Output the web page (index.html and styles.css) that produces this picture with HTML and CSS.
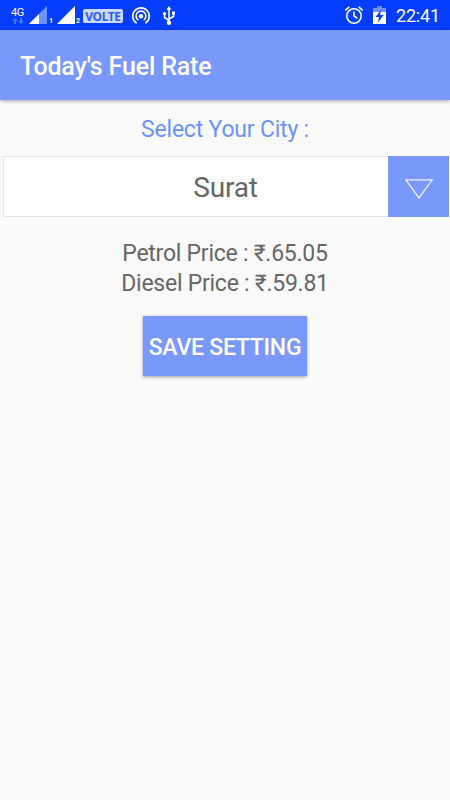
FILE: index.html
```html
<!DOCTYPE html>
<html lang="en">
<head>
<meta charset="utf-8">
<title>Today's Fuel Rate</title>
<link rel="stylesheet" href="styles.css">
</head>
<body>
<header class="status">
  <div class="network">
    <span class="network-type">4G</span>
    <svg class="arrows" width="12" height="6" viewBox="0 0 12 6"><path d="M0 3L3 0l3 3H4v3H2V3zM6 3h2V0h2v3h2L9 6z"/></svg>
  </div>
  <svg class="signal" width="18" height="18" viewBox="0 0 18 18"><path class="dim" d="M0 18L18 0v18z"/><path d="M0 18L10 8v10z"/></svg>
  <span class="sim sim-one">1</span>
  <svg class="signal" width="18" height="18" viewBox="0 0 18 18"><path d="M0 18L18 0v18z"/></svg>
  <span class="sim sim-two">2</span>
  <span class="volte">VOLTE</span>
  <svg class="hotspot line" width="20" height="20" viewBox="0 0 20 20"><path d="M5.6 17.2a8.3 8.3 0 1 1 8.8 0M7.3 14.1a4.9 4.9 0 1 1 5.4 0"/><circle class="fill" cx="10" cy="10.2" r="2.2"/></svg>
  <svg class="usb line" width="14" height="20" viewBox="0 0 14 20"><path d="M7 17V3M7 14.5L2.500 11.500V8M7 13l4.500-2.500V7"/><path class="fill" d="M7 0l2.500 3.700h-5z"/><circle class="fill" cx="7" cy="16.800" r="2.200"/><circle class="fill" cx="2.500" cy="7.500" r="1.600"/><path class="fill" d="M10 5.500h3v3h-3z"/></svg>
  <svg class="alarm line" width="20" height="20" viewBox="0 0 20 20"><circle cx="10" cy="11" r="7.200"/><path d="M10 6.500V11l3.500 2.300M1.300 5.300l4-3.500M18.700 5.300l-4-3.500"/></svg>
  <svg class="battery" width="13" height="18" viewBox="0 0 13 18"><path class="dim" d="M0 2h4V0h5v2h4v4H0z"/><path d="M0 6h13v12H0z"/><path class="bolt" d="M8 4L2.500 11H6l-1 5.500L10.700 9H7z"/></svg>
  <time class="clock">22:41</time>
</header>
<div class="toolbar"><h1 class="title">Today's Fuel Rate</h1></div>
<main class="content">
  <label class="prompt">Select Your City :</label>
  <div class="picker">
    <span class="city">Surat</span>
    <button class="drop" aria-label="Open city list"><svg width="28" height="20" viewBox="0 0 28 20"><path d="M.8.800h26.400L14 19z"/></svg></button>
  </div>
  <p class="price petrol">Petrol Price : ₹.65.05</p>
  <p class="price diesel">Diesel Price : ₹.59.81</p>
  <button class="save">SAVE SETTING</button>
</main>
</body>
</html>
```

FILE: styles.css
```css
* { box-sizing: border-box; }
body {
  margin: 0;
  height: 800px;
  overflow: hidden;
  background: #fafafa;
  color: #666;
  font-family: Roboto, sans-serif;
}
button { border: 0; padding: 0; font-family: inherit; }
svg { display: block; flex: none; }

.status {
  display: flex;
  align-items: flex-start;
  height: 30px;
  padding: 6px 0 0 11px;
  background: #043efc;
  color: #fff;
  fill: #fff;
}
.network { width: 18px; }
.network-type { display: block; height: 12px; font-size: 11px; line-height: 13px; letter-spacing: -.4px; }
.arrows { margin-left: 1px; fill: #4774ff; }
.dim { fill: #6d91ff; }
.sim { font-size: 7px; font-weight: 700; line-height: 8px; padding-top: 11px; }
.sim-one { width: 10px; padding-left: 2px; }
.sim-two { width: 8px; padding-left: 1px; }
.volte {
  width: 40px;
  height: 14px;
  margin-top: 3px;
  border-radius: 2px;
  background: #cbd8ff;
  color: #2d5cf5;
  font: 700 12px/15px "Noto Sans", sans-serif;
  letter-spacing: -.4px;
  text-align: center;
}
.line { fill: none; stroke: #fff; stroke-width: 1.6; }
.fill { fill: #fff; stroke: none; }
.hotspot { margin-left: 8px; }
.usb { margin-left: 11px; }
.alarm { margin: -1px 0 0 168px; }
.battery { margin-left: 9px; }
.bolt { fill: #043efc; }
.clock { margin-left: 10px; font-size: 18px; line-height: 20px; letter-spacing: -.2px; }

.toolbar {
  display: flex;
  align-items: center;
  height: 70px;
  padding: 4px 20px 0;
  background: #7898fc;
  box-shadow: 0 1px 4px rgba(0, 0, 0, .35);
}
.title { margin: 0; color: #fff; font-size: 25px; font-weight: 500; line-height: 30px; letter-spacing: -.15px; }

.content { display: flex; flex-direction: column; align-items: center; }
.prompt { margin-top: 15px; color: #6d91fa; font-size: 23px; line-height: 30px; letter-spacing: -.2px; }
.picker {
  display: flex;
  align-self: stretch;
  height: 61px;
  margin: 11px 1px 0 3px;
  border: 1px solid #e5e5e5;
  border-right: 0;
  background: #fff;
}
.city { flex: 1; padding-left: 59px; text-align: center; font-size: 28px; line-height: 62px; letter-spacing: -.2px; }
.drop {
  display: flex;
  align-items: center;
  justify-content: center;
  width: 61px;
  height: 61px;
  margin: -1px 0;
  padding-top: 4px;
  background: #7898fc;
  fill: none;
  stroke: #edf1ff;
  stroke-width: 1.3;
}
.price { margin: 0; font-size: 23px; line-height: 30px; letter-spacing: -.25px; }
.petrol { margin-top: 22px; }
.save {
  width: 164px;
  height: 60px;
  margin-top: 17px;
  padding-top: 3px;
  background: #7898fc;
  box-shadow: 0 1px 3px rgba(0, 0, 0, .38);
  color: #fff;
  font-size: 23px;
  font-weight: 500;
  letter-spacing: -.25px;
  white-space: nowrap;
}
```
